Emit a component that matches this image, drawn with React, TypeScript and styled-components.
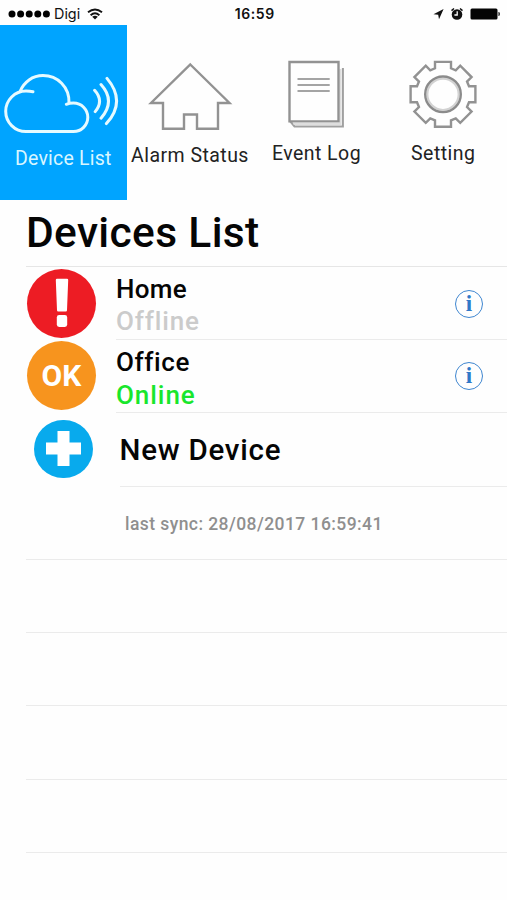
import React from "react";
import styled, { createGlobalStyle } from "styled-components";

const GlobalStyle = createGlobalStyle`
  * { box-sizing: border-box; }
  body { margin: 0; background: #fff; }
`;

const Screen = styled.main`
  width: 507px;
  height: 900px;
  overflow: hidden;
  display: flex;
  flex-direction: column;
  background: #fefefe;
  color: #050505;
  font-family: Roboto, "Noto Sans", sans-serif;
`;

const StatusBar = styled.header`
  height: 25px;
  flex: none;
  display: grid;
  grid-template-columns: 1fr auto 1fr;
  padding: 1px 6px 0 8px;
  line-height: 25px;
  font-family: Inter, sans-serif;
  font-size: 14px;
  color: #111;
`;

const Carrier = styled.div`
  display: flex;
  align-items: center;
  font-size: 14.4px;
  line-height: 24px;
  svg { flex: none; }
  span { margin: 0 7px 0 4px; }
`;

const Clock = styled.div`
  padding-left: 0.5px;
  font-weight: 600;
  font-size: 14px;
  letter-spacing: 0.6px;
`;

const Indicators = styled.div`
  display: flex;
  align-items: center;
  justify-content: flex-end;
`;

const Tabs = styled.nav`
  height: 175px;
  flex: none;
  display: grid;
  grid-template-columns: 126.5px 127px 126px 1fr;
`;

const Tab = styled.a<{ $active?: boolean }>`
  display: flex;
  flex-direction: column;
  align-items: center;
  background: ${(p) => (p.$active ? "#00a4ff" : "transparent")};
  color: ${(p) => (p.$active ? "#d9f6ff" : "#222")};
`;

const TabIcon = styled.svg`
  display: block;
  flex: none;
  width: 126px;
  height: 115px;
  fill: none;
  stroke: #929292;
  stroke-width: 2.4;
`;

const TabLabel = styled.span<{ $drop?: number; $track?: number }>`
  margin-top: ${(p) => p.$drop ?? 0}px;
  font-size: 19.5px;
  letter-spacing: ${(p) => p.$track ?? 0.45}px;
  line-height: 28px;
  white-space: nowrap;
`;

const Title = styled.h1`
  flex: none;
  height: 66px;
  margin: 0;
  padding-left: 26px;
  line-height: 65px;
  font-size: 42.5px;
  font-weight: 500;
  letter-spacing: 0.35px;
`;

const List = styled.ul`
  list-style: none;
  margin: 0;
  padding: 0 0 0 26px;
`;

const Row = styled.li`
  display: flex;
  height: 73.3px;
`;

const Avatar = styled.div<{ $gap: number }>`
  flex: none;
  width: ${(p) => p.$gap}px;
  display: flex;
  align-items: center;
  padding-left: 1px;
`;

const Disc = styled.div<{ $color: string; $size: number; $indent?: number }>`
  width: ${(p) => p.$size}px;
  height: ${(p) => p.$size}px;
  margin-left: ${(p) => p.$indent ?? 0}px;
  border-radius: 50%;
  background: ${(p) => p.$color};
  display: flex;
  align-items: center;
  justify-content: center;
  color: #fff;
  font-size: 30px;
  line-height: 34px;
  font-weight: 700;
`;

const Cell = styled.div<{ $line?: boolean }>`
  flex: 1;
  display: flex;
  justify-content: space-between;
  border-top: 1.5px solid ${(p) => (p.$line === false ? "transparent" : "#ebebeb")};
`;

const FirstRow = styled(Row)`
  height: 73px;
  border-top: 1px solid #e6e6e6;
`;

const Names = styled.div<{ $top: number }>`
  padding-top: ${(p) => p.$top}px;
  line-height: 32.5px;
  font-size: 26px;
  font-weight: 500;
`;

const Name = styled.div<{ $track?: number }>`
  letter-spacing: ${(p) => p.$track ?? 0}px;
`;

const State = styled(Name)<{ $online?: boolean }>`
  color: ${(p) => (p.$online ? "#19e62c" : "#cbcbcb")};
`;

const InfoButton = styled.button`
  align-self: center;
  width: 28px;
  height: 28px;
  margin: 0 24px 0 0;
  padding: 0;
  border: 1.7px solid #3f86d0;
  border-radius: 50%;
  background: transparent;
  color: #2f78c8;
  font: 700 23px/24px "Liberation Serif", serif;
`;

const NewDevice = styled.div`
  padding-left: 3.5px;
  font-size: 29.5px;
  font-weight: 500;
  line-height: 75px;
  letter-spacing: 0.75px;
`;

const Sync = styled.div`
  padding-left: 5px;
  font-size: 17.5px;
  font-weight: 500;
  line-height: 74px;
  letter-spacing: 0.43px;
  color: #8f8f8f;
`;

const gearPoints = Array.from({ length: 8 }, (_, i) => {
  const a = (i * Math.PI) / 4;
  return [[-8, -26], [-8, -32.4], [8, -32.4], [8, -26]]
    .map(([x, y]) => `${(x * Math.cos(a) - y * Math.sin(a)).toFixed(2)},${(x * Math.sin(a) + y * Math.cos(a)).toFixed(2)}`)
    .join(" ");
}).join(" ");

export default function App() {
  return (
    <Screen>
      <GlobalStyle />
      <StatusBar>
        <Carrier>
          <svg width="42" height="8" viewBox="0 0 42 8">
            {[4, 12.6, 21.2, 29.8, 38.4].map((x) => <circle key={x} cx={x} cy="4" r="3.5" />)}
          </svg>
          <span>Digi</span>
          <svg width="16" height="12" viewBox="0 0 16 12" fill="none" stroke="#111" strokeWidth="1.9">
            <path d="M1 4.2Q8 -1.4 15 4.2M3.6 7.2Q8 3.4 12.4 7.2" />
            <path d="M5.2 8.7Q8 6.6 10.8 8.7L8 11.6Z" fill="#111" stroke="none" />
          </svg>
        </Carrier>
        <Clock>16:59</Clock>
        <Indicators>
          <svg width="68" height="16" viewBox="0 0 68 16">
            <path d="M.5 8.2L10.6 3L6 13.2L5.2 8.8Z" fill="#111" />
            <circle cx="24" cy="8.5" r="5.3" fill="#111" />
            <path d="M18.5 4.6L21 2.5M29.5 4.6L27 2.5" stroke="#111" strokeWidth="1.5" />
            <path d="M24.2 5.2V9H21.4" stroke="#fff" strokeWidth="1.3" fill="none" />
            <rect x="37.5" y="2.5" width="27" height="11" rx="1.5" fill="#050505" />
            <path d="M65.4 6H66Q67 6.4 67 8T66 10H65.4Z" fill="#333" />
          </svg>
        </Indicators>
      </StatusBar>

      <Tabs>
        <Tab $active>
          <TabIcon viewBox="0 25 126 115">
            <g stroke="#e6faff" strokeWidth="3" strokeLinecap="round" strokeLinejoin="round">
              <path d="M33 91.7Q30 91 26 91A20.3 20.3 0 0 0 26 131.6H73.5A14.2 14.2 0 0 0 73.5 103Q69.5 103 66.3 104.3M20 91.5C24 82 32.5 75.6 43 75.6C57.5 75.6 69.5 87 69 103" />
              <path d="M94.6 90.3Q104.2 100.8 95.2 111.6M101 84.6Q116 101 101 118.2M107 78.4Q126.5 101.5 106.4 123.6" />
            </g>
          </TabIcon>
          <TabLabel $drop={5} $track={0.2}>Device List</TabLabel>
        </Tab>
        <Tab>
          <TabIcon viewBox="127 25 126 115">
            <path d="M190.3 64.5L229.5 103H218V128.7H197V114.5H184V128.7H163V103H151Z" />
          </TabIcon>
          <TabLabel $drop={2}>Alarm Status</TabLabel>
        </Tab>
        <Tab>
          <TabIcon viewBox="254.5 25 126 115">
            <path d="M343.4 68V126.5H295L290.5 121" stroke="#a0a0a0" strokeWidth="2" />
            <path d="M341 69V124H294" stroke="#dedede" strokeWidth="2" />
            <path d="M290 62H339V121.4H290Z" fill="#fefefe" />
            <path d="M298 79H330.2M298 85H330.2M298 91H330.2" stroke="#a4a4a4" strokeWidth="1.8" />
          </TabIcon>
          <TabLabel>Event Log</TabLabel>
        </Tab>
        <Tab>
          <TabIcon viewBox="380 25 126 115">
            <g transform="translate(443 94.3)">
              <polygon points={gearPoints} />
              <circle r="15.6" stroke="#d2d2d2" strokeWidth="2" />
              <circle r="17.8" stroke="#8b8b8b" />
            </g>
          </TabIcon>
          <TabLabel>Setting</TabLabel>
        </Tab>
      </Tabs>

      <Title>Devices List</Title>

      <List>
        <FirstRow>
          <Avatar $gap={90}>
            <Disc $color="#ed1c24" $size={69}>
              <svg width="14" height="50" viewBox="0 0 14 50" fill="#fff">
                <path d="M.8 2Q.8.8 2 .8H12Q13.2.8 13.2 2L12 32.2Q12 33.4 10.8 33.4H3.2Q2 33.4 2 32.2Z" />
                <rect x="1.8" y="37" width="10.4" height="12" rx="2.4" />
              </svg>
            </Disc>
          </Avatar>
          <Cell $line={false}>
            <Names $top={4.5}>
              <Name $track={0.3}>Home</Name>
              <State $track={0.85}>Offline</State>
            </Names>
            <InfoButton>i</InfoButton>
          </Cell>
        </FirstRow>
        <Row>
          <Avatar $gap={90}>
            <Disc $color="#f7941e" $size={69}>OK</Disc>
          </Avatar>
          <Cell>
            <Names $top={6}>
              <Name $track={0.6}>Office</Name>
              <State $online $track={0.95}>Online</State>
            </Names>
            <InfoButton>i</InfoButton>
          </Cell>
        </Row>
        <Row>
          <Avatar $gap={90}>
            <Disc $color="#08aaed" $size={58.5} $indent={7}>
              <svg width="35" height="35" viewBox="0 0 35 35" fill="#fff">
                <path d="M11.5 0H23.5V11.5H35V23.5H23.5V35H11.5V23.5H0V11.5H11.5Z" />
              </svg>
            </Disc>
          </Avatar>
          <Cell>
            <NewDevice>New Device</NewDevice>
          </Cell>
        </Row>
        <Row>
          <Avatar $gap={94} />
          <Cell>
            <Sync>last sync: 28/08/2017 16:59:41</Sync>
          </Cell>
        </Row>
        {[0, 1, 2, 3, 4].map((n) => (
          <Row key={n}>
            <Cell />
          </Row>
        ))}
      </List>
    </Screen>
  );
}
